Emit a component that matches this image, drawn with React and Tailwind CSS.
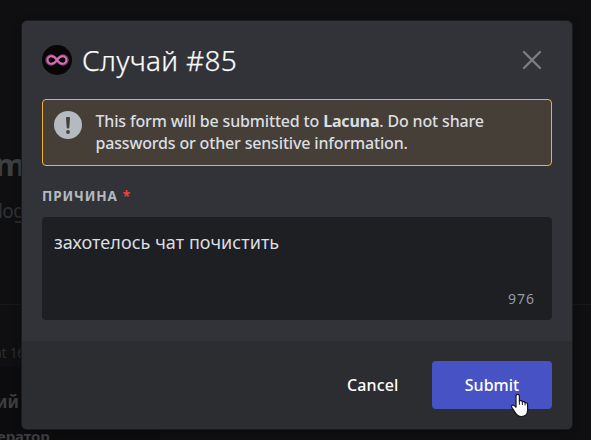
function Avatar() {
  return (
    <svg className="size-[30px] shrink-0" viewBox="0 0 30 30" fill="none">
      <circle cx="15" cy="15" r="15" fill="#080706" />
      <path d="M15 15C12.6 11.6 11 10.7 9 10.7a4.3 4.3 0 0 0 0 8.6c2 0 3.6-.9 6-4.3s4-4.3 6-4.3a4.3 4.3 0 0 1 0 8.6c-2 0-3.6-.9-6-4.3Z" stroke="#7c3c70" strokeWidth="2.7" />
      <path d="M15 15C12.8 12 11.4 11.2 9.4 11.2a3.8 3.8 0 0 0 0 7.6c2 0 3.4-.8 5.6-3.8s3.6-3.8 5.6-3.8a3.8 3.8 0 0 1 0 7.6c-2 0-3.4-.8-5.6-3.8Z" stroke="#d66fb8" strokeWidth="1.9" />
    </svg>
  );
}

function Backdrop() {
  return (
    <div className="flex h-full flex-col overflow-hidden whitespace-nowrap bg-[#0f0f11] text-[#3d3e40]">
      <div className="mt-[142px] h-[44px] -ml-[5px] text-[31px] leading-[44px] font-bold">m</div>
      <div className="mt-[11px] h-[28px] -ml-[2px] text-[19px] leading-[28px] tracking-[-0.6px] text-[#303133]">log</div>
      <div className="mt-[79px] border-t border-[#171719]" />
      <div className="mt-[38px] h-[20px] -ml-[6px] text-[14px] leading-[20px] tracking-[-0.3px] text-[#2b2c2e]">at 16</div>
      <div className="mt-[4px] w-[160px] flex-1 bg-[#0c0c0e]">
        <div className="mt-[23px] h-[24px] -ml-[4px] text-[17px] leading-[24px] font-bold">ий</div>
        <div className="mt-[11px] h-[22px] -ml-[3px] text-[15px] leading-[22px] font-bold tracking-[-0.1px]">ератор</div>
      </div>
    </div>
  );
}

function HandCursor() {
  return (
    <svg className="absolute left-[78px] top-[32px] h-[25px] w-[19px]" viewBox="0 0 19 25">
      <path d="M6 3.2C6 .7 9.4.7 9.4 3.2V8c1-.8 2.7-.4 3 .8 1.1-.6 2.4-.1 2.7 1 1.3-.4 2.5.3 2.5 1.7V17c0 4-2.4 6.5-6.2 6.5-3 0-4.7-1.3-6.2-3.9l-3.4-5.2c-1-1.8.9-3.1 2.5-1.8L6 14.2Z" fill="#fff" stroke="#15151c" strokeWidth="1.2" strokeLinejoin="round" />
      <path d="M9.4 7.5v4.3M12.4 8.7v3.3M15.1 9.8v2.5" stroke="#15151c" strokeWidth="1" />
    </svg>
  );
}

export default function App() {
  return (
    <div className="relative h-[440px] w-[591px] overflow-hidden font-['Noto_Sans','Liberation_Sans',sans-serif]">
      <Backdrop />
      <div className="absolute left-[22px] top-[21px] flex h-[408px] w-[550px] flex-col overflow-hidden rounded-[5px] bg-[#323338] shadow-[0_0_0_1px_#1a1b1d,0_2px_10px_rgba(0,0,0,0.3)]">
        <header className="flex h-[78px] items-center px-5">
          <Avatar />
          <h1 className="ml-[10px] flex-1 whitespace-nowrap text-[28px] leading-[36px] font-light tracking-[0.3px] text-white [-webkit-text-stroke:0.25px_#f2f3f5]">Случай #85</h1>
          <svg className="mr-[10px] size-5" viewBox="0 0 20 20" stroke="#7c7e84" strokeWidth="2.3" strokeLinecap="round">
            <path d="M2 2l16 16M18 2L2 18" />
          </svg>
        </header>

        <main className="flex flex-1 flex-col px-5">
          <div className="flex h-[67px] rounded-[4px] border border-[#f0b132] bg-[#453f38] pl-[11px] pt-[11px]">
            <svg className="size-7 shrink-0" viewBox="0 0 28 28">
              <circle cx="14" cy="14" r="14" fill="#b5bac1" />
              <path d="M12 7a1 1 0 0 1 1-1h2a1 1 0 0 1 1 1l-.7 9.2a1.3 1.3 0 0 1-2.6 0Z" fill="#453f38" />
              <circle cx="14" cy="21" r="1.9" fill="#453f38" />
            </svg>
            <p className="-mt-[1px] ml-[13.5px] whitespace-nowrap text-[16px] leading-[22px] font-medium tracking-[-0.17px] text-[#dbdee1]">
              <span className="block">This form will be submitted to <strong className="font-bold">Lacuna</strong>. Do not share</span>
              <span className="block">passwords or other sensitive information.</span>
            </p>
          </div>

          <label className="mt-[20px] flex h-5 items-center text-[13.5px] leading-5 font-bold tracking-[0.9px] text-[#b5bac1]">
            ПРИЧИНА<span className="ml-[5px] text-[#f23f42]">*</span>
          </label>

          <div className="mt-[11px] flex h-[103px] flex-col justify-between rounded-[4px] bg-[#1e1f22] px-3 pb-[10px] pt-[13px]">
            <span className="whitespace-nowrap text-[18px] leading-6 tracking-[0.06px] text-[#dbdee1]">захотелось чат почистить</span>
            <span className="mr-[5px] self-end text-[14px] leading-[22px] tracking-[1px] text-[#949ba4]">976</span>
          </div>
        </main>

        <footer className="flex h-[88px] items-center justify-end bg-[#2c2d31] px-5">
          <button className="mr-[33.5px] text-[16px] leading-6 font-medium tracking-[0.15px] text-white">Cancel</button>
          <button className="relative h-12 w-[120px] rounded-[4px] bg-[#4752c4] text-[16px] leading-6 font-medium text-white">
            Submit
            <HandCursor />
          </button>
        </footer>
      </div>
    </div>
  );
}
